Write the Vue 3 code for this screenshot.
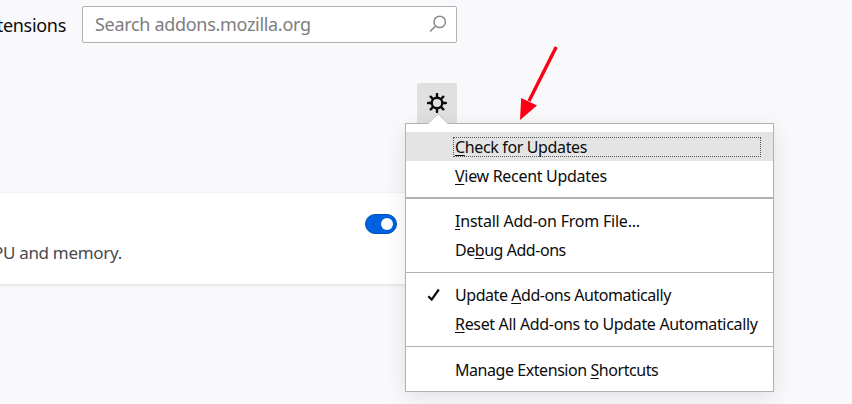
<script setup>
const groups = [
  [
    { before: '', key: 'C', after: 'heck for Updates', kind: 'check', active: true },
    { before: '', key: 'V', after: 'iew Recent Updates', kind: 'view' },
  ],
  [
    { before: '', key: 'I', after: 'nstall Add-on From File...', kind: 'install' },
    { before: 'De', key: 'b', after: 'ug Add-ons', kind: 'debug' },
  ],
  [
    { before: 'Update ', key: 'A', after: 'dd-ons Automatically', kind: 'update', checked: true },
    { before: '', key: 'R', after: 'eset All Add-ons to Update Automatically', kind: 'reset' },
  ],
  [{ before: 'Manage Extension ', key: 'S', after: 'hortcuts', kind: 'manage' }],
]
</script>

<template>
  <main class="page">
    <header class="header">
      <span class="title"><span>tensions</span></span>
      <div class="search">
        <span class="placeholder">Search addons.mozilla.org</span>
        <svg class="glass" width="18" height="18" viewBox="0 0 18 18">
          <circle cx="10.7" cy="6.9" r="5.7" />
          <path d="M6.6 11 1.2 16.4" />
        </svg>
      </div>
    </header>

    <div class="tools">
      <button class="gear" aria-label="Tools">
        <svg width="20" height="20" viewBox="-10 -10 20 20">
          <circle r="5.3" />
          <path d="M0-6V-9M0 6V9M-6 0H-9M6 0H9M-4.2-4.2-6.3-6.3M4.2-4.2 6.3-6.3M-4.2 4.2-6.3 6.3M4.2 4.2 6.3 6.3" />
        </svg>
      </button>
    </div>

    <section class="card">
      <div class="switch"><i></i></div>
      <p class="description"><span>PU and memory.</span></p>
    </section>

    <nav class="menu">
      <svg class="notch" width="22" height="11" viewBox="0 0 22 11">
        <path d="M1 11 11 1 21 11Z" fill="#fff" />
        <path d="M1 10.5 11 .8 21 10.5" fill="none" stroke="#c4c4c6" />
      </svg>
      <div v-for="(group, g) in groups" :key="g" class="group">
        <div v-for="item in group" :key="item.kind" class="item" :class="[item.kind, { active: item.active }]">
          <svg v-if="item.checked" class="tick" width="14" height="14" viewBox="0 0 14 14">
            <path d="M1.3 8.2 4.7 11.6 11.8 1.5" />
          </svg>
          <span class="label"><span class="text">{{ item.before }}<u>{{ item.key }}</u>{{ item.after }}</span></span>
        </div>
      </div>
    </nav>

    <svg class="arrow" width="40" height="76" viewBox="0 0 40 76">
      <path d="M36.2 2 9 56" stroke="#fb0015" stroke-width="3.4" />
      <path d="M1.2 53 17 60.5 0 75Z" fill="#fb0015" />
    </svg>
  </main>
</template>

<style>
body { margin: 0; }
</style>

<style scoped>
* { box-sizing: border-box; }
.page {
  position: relative;
  width: 852px;
  height: 404px;
  overflow: hidden;
  background: #f9f9fb;
  font-family: "Noto Sans", sans-serif;
  color: #0c0c0d;
}
.header { display: flex; padding-top: 6px; height: 43px; }
.title {
  width: 66px;
  display: flex;
  justify-content: flex-end;
  font-size: 18px;
  line-height: 38px;
  letter-spacing: -.3px;
}
.search {
  width: 375px;
  height: 37px;
  margin-left: 16px;
  padding: 0 9px 0 12px;
  border: 1px solid #b1b1b3;
  border-radius: 2px;
  background: #fff;
  display: flex;
  align-items: center;
  justify-content: space-between;
}
.placeholder {
  font-size: 18px;
  line-height: 35px;
  letter-spacing: -.31px;
  color: #7d7d7f;
  white-space: nowrap;
}
.glass { fill: none; stroke: #8b8b8d; stroke-width: 1.5; margin-bottom: 2px; }
.tools { display: flex; padding: 40px 0 0 417px; }
.gear {
  width: 40px;
  height: 41px;
  padding: 0 0 1px;
  border: 0;
  border-radius: 2px 2px 0 0;
  background: #e0e0e1;
  display: flex;
  align-items: center;
  justify-content: center;
}
.gear svg { fill: none; stroke: #0c0c0d; stroke-width: 2.4; stroke-linecap: round; }
.card {
  width: 414px;
  height: 91px;
  margin-top: 69px;
  padding: 21px 17px 0 0;
  background: #fff;
  box-shadow: 0 1px 4px rgba(12, 12, 13, .12);
}
.switch {
  width: 32px;
  height: 20px;
  margin-left: auto;
  padding: 0 3px;
  border-radius: 10px;
  border: 1px solid #0250bb;
  background: #0060df;
  display: flex;
  justify-content: flex-end;
  align-items: center;
}
.switch i { width: 12px; height: 12px; border-radius: 50%; background: #fff; }
.description {
  width: 122px;
  margin: 6px 0 0;
  display: flex;
  justify-content: flex-end;
  white-space: nowrap;
  font-size: 17px;
  line-height: 26px;
  letter-spacing: -.3px;
  color: #4a4a4f;
}
.menu {
  position: absolute;
  left: 405px;
  top: 123px;
  width: 369px;
  height: 269px;
  border: 1px solid #b1b1b3;
  background: #fff;
  box-shadow: 0 5px 20px rgba(12, 12, 13, .1);
  color: #0c0c0d;
}
.notch { position: absolute; left: 21px; top: -11px; }
.group { padding: 8px 0 7px; }
.group + .group { border-top: 1px solid #b1b1b3; }
.group:nth-of-type(2) { border-top-width: 2px; padding: 7px 0 8px; }
.group:nth-of-type(3) { padding: 7px 0 8px; }
.item { height: 29px; display: flex; align-items: center; padding-left: 49px; }
.item.active { background: #e4e4e5; padding-left: 47px; }
.tick {
  width: 14px;
  margin-left: -28px;
  margin-right: 14px;
  fill: none;
  stroke: #0c0c0d;
  stroke-width: 2.2;
}
.label { line-height: 22px; font-size: 16px; white-space: nowrap; }
.active .label { width: 308px; height: 20px; line-height: 19px; border: 1px dotted #555; padding-left: 1px; }
.text { letter-spacing: -.3px; }
.check .text { letter-spacing: -.36px; }
.install .text { letter-spacing: -.22px; }
.debug .text { letter-spacing: -.46px; }
.update .text { letter-spacing: -.44px; }
.reset .text { letter-spacing: -.33px; }
.manage .text { letter-spacing: -.44px; }
u { text-underline-offset: 2px; text-decoration-thickness: 1px; }
.arrow { position: absolute; left: 520px; top: 45px; }
</style>
